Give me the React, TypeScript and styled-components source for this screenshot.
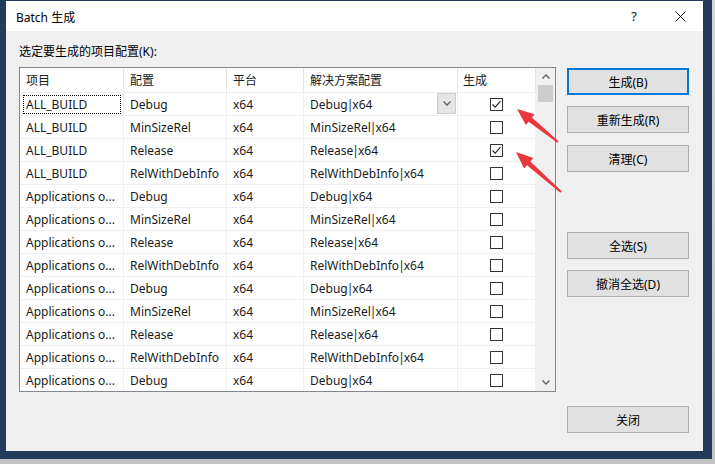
import styled, {createGlobalStyle} from 'styled-components';

const GlobalStyle = createGlobalStyle`
  html, body {
    margin: 0;
    padding: 0;
    background: #ffffff;
  }
  body {
    font-family: 'Noto Sans', 'Noto Sans CJK SC', sans-serif;
    font-size: 12px;
    color: #000;
  }
`;

const Frame = styled.div`
  position: relative;
  width: 715px;
  height: 464px;
  box-sizing: border-box;
  padding: 0 3px 5px 0;
  background: linear-gradient(180deg, #d6d6d6 0%, #c4c4c4 100%);
  overflow: hidden;
`;

const Window = styled.div`
  box-sizing: border-box;
  width: 712px;
  height: 459px;
  border-style: solid;
  border-color: #233b5b;
  border-width: 1px 9px 8px 6px;
  background: #f0f0f0;
  display: flex;
  flex-direction: column;
`;

const TitleBar = styled.div`
  height: 30px;
  flex: none;
  background: #ffffff;
  display: flex;
  align-items: center;
  padding: 0 0 0 10px;
`;

const Title = styled.div`
  flex: 1;
  font-size: 12px;
  color: #000;
  padding-top: 1px;
`;

const TitleButton = styled.div`
  width: 46px;
  height: 30px;
  display: flex;
  align-items: center;
  justify-content: center;
  font-size: 13px;
  color: #111;
`;

const Body = styled.div`
  flex: 1;
  display: grid;
  grid-template-columns: 537px 122px;
  column-gap: 11px;
  padding: 13px 0 0 13px;
`;

const Left = styled.div`
  display: flex;
  flex-direction: column;
`;

const Label = styled.div`
  height: 16px;
  line-height: 16px;
  margin-bottom: 7px;
  color: #000;
`;

const Table = styled.div`
  box-sizing: border-box;
  width: 537px;
  height: 325px;
  border: 1px solid #828790;
  background: #ffffff;
  display: flex;
`;

const Grid = styled.div`
  width: 516px;
  display: grid;
  grid-template-columns: 104px 103px 77px 154px 78px;
  grid-auto-rows: 23px;
  grid-template-rows: 24px;
`;

const HeadCell = styled.div<{$pad?: number}>`
  box-sizing: border-box;
  display: flex;
  align-items: center;
  padding-left: ${({$pad}) => $pad ?? 6}px;
  border-right: 1px solid #e5e5e5;
  color: #1a1a1a;
`;

const Cell = styled.div<{$center?: boolean}>`
  position: relative;
  box-sizing: border-box;
  display: flex;
  align-items: center;
  justify-content: ${({$center}) => ($center ? 'center' : 'flex-start')};
  padding-left: ${({$center}) => ($center ? '0' : '6px')};
  border-right: 1px solid #f0f0f0;
  border-top: 1px solid #f0f0f0;
  color: #1a1a1a;
  white-space: nowrap;
  overflow: hidden;
`;

const Pipe = styled.span`
  margin: 0 -1px;
`;

const Focus = styled.div`
  position: absolute;
  left: 3px;
  top: 2px;
  right: 2px;
  bottom: 1px;
  border: 1px dotted #000;
  pointer-events: none;
`;

const DropButton = styled.div`
  position: absolute;
  right: 1px;
  top: 0px;
  width: 19px;
  height: 21px;
  box-sizing: border-box;
  background: #e5e5e5;
  border: 1px solid #cccccc;
  display: flex;
  align-items: center;
  justify-content: center;
`;

const Box = styled.div`
  width: 13px;
  height: 13px;
  box-sizing: border-box;
  border: 1px solid #333333;
  background: #fff;
  display: flex;
  align-items: center;
  justify-content: center;
`;

const ScrollBar = styled.div`
  width: 19px;
  background: #f0f0f0;
  display: flex;
  flex-direction: column;
  align-items: center;
`;

const ScrollArrow = styled.div`
  height: 17px;
  width: 17px;
  display: flex;
  align-items: center;
  justify-content: center;
`;

const Thumb = styled.div`
  width: 15px;
  height: 17px;
  background: #cdcdcd;
`;

const ScrollTrack = styled.div`
  flex: 1;
`;

const Buttons = styled.div`
  display: flex;
  flex-direction: column;
  padding-top: 24px;
`;

const Button = styled.div<{$default?: boolean; $gap?: number}>`
  box-sizing: border-box;
  height: 27px;
  margin-top: ${({$gap}) => $gap ?? 0}px;
  background: #e1e1e1;
  border: ${({$default}) => ($default ? '2px solid #0078d7' : '1px solid #adadad')};
  display: flex;
  align-items: center;
  justify-content: center;
  color: #000;
`;

const Overlay = styled.svg`
  position: absolute;
  left: 0;
  top: 0;
  pointer-events: none;
`;

type RowData = {
  project: string;
  config: string;
  platform: string;
  build: boolean;
};

const configs = ['Debug', 'MinSizeRel', 'Release', 'RelWithDebInfo'];

const rows: RowData[] = Array.from({length: 13}, (_, i) => ({
  project: i < 4 ? 'ALL_BUILD' : 'Applications o...',
  config: configs[i % 4],
  platform: 'x64',
  build: i === 0 || i === 2,
}));

const Check = () => (
  <svg width="11" height="11" viewBox="0 0 11 11">
    <polyline points="1.5,5.5 4.2,8.2 9.5,2.2" fill="none" stroke="#222" strokeWidth="1.1" />
  </svg>
);

const Chevron = ({up}: {up?: boolean}) => (
  <svg width="8" height="5" viewBox="0 0 8 5">
    <polyline
      points={up ? '0.5,4.5 4,1 7.5,4.5' : '0.5,0.5 4,4 7.5,0.5'}
      fill="none"
      stroke="#606060"
      strokeWidth="1.3"
    />
  </svg>
);

const arrowPoints = (tx: number, ty: number, ex: number, ey: number) => {
  const dx = ex - tx;
  const dy = ey - ty;
  const len = Math.hypot(dx, dy);
  const ux = dx / len;
  const uy = dy / len;
  const nx = -uy;
  const ny = ux;
  const bx = tx + 17 * ux;
  const by = ty + 17 * uy;
  const p = (x: number, y: number) => `${x.toFixed(1)},${y.toFixed(1)}`;
  return [
    p(tx, ty),
    p(bx + 7 * nx, by + 7 * ny),
    p(bx + 2.6 * nx, by + 2.6 * ny),
    p(ex + 1 * nx, ey + 1 * ny),
    p(ex - 1 * nx, ey - 1 * ny),
    p(bx - 2.6 * nx, by - 2.6 * ny),
    p(bx - 7 * nx, by - 7 * ny),
  ].join(' ');
};

const Row = ({row, first}: {row: RowData; first: boolean}) => (
  <>
    <Cell>
      {row.project}
      {first && <Focus />}
    </Cell>
    <Cell>{row.config}</Cell>
    <Cell>{row.platform}</Cell>
    <Cell>
      {row.config}
      <Pipe>|</Pipe>
      {row.platform}
      {first && (
        <DropButton>
          <Chevron />
        </DropButton>
      )}
    </Cell>
    <Cell $center>
      <Box>{row.build && <Check />}</Box>
    </Cell>
  </>
);

const App = () => (
  <>
    <GlobalStyle />
    <Frame>
      <Window>
        <TitleBar>
          <Title>Batch 生成</Title>
          <TitleButton>?</TitleButton>
          <TitleButton>
            <svg width="11" height="11" viewBox="0 0 11 11">
              <path d="M0.5 0.5 L10.5 10.5 M10.5 0.5 L0.5 10.5" stroke="#111" strokeWidth="1" />
            </svg>
          </TitleButton>
        </TitleBar>
        <Body>
          <Left>
            <Label>选定要生成的项目配置(K):</Label>
            <Table>
              <Grid>
                <HeadCell>项目</HeadCell>
                <HeadCell>配置</HeadCell>
                <HeadCell>平台</HeadCell>
                <HeadCell>解决方案配置</HeadCell>
                <HeadCell $pad={5}>生成</HeadCell>
                {rows.map((r, i) => (
                  <Row key={i} row={r} first={i === 0} />
                ))}
              </Grid>
              <ScrollBar>
                <ScrollArrow>
                  <Chevron up />
                </ScrollArrow>
                <Thumb />
                <ScrollTrack />
                <ScrollArrow>
                  <Chevron />
                </ScrollArrow>
              </ScrollBar>
            </Table>
          </Left>
          <Buttons>
            <Button $default>生成(B)</Button>
            <Button $gap={11}>重新生成(R)</Button>
            <Button $gap={12}>清理(C)</Button>
            <Button $gap={60}>全选(S)</Button>
            <Button $gap={11}>撤消全选(D)</Button>
            <Button $gap={109}>关闭</Button>
          </Buttons>
        </Body>
      </Window>
      <Overlay width="715" height="464">
        <polygon points={arrowPoints(517, 109, 558, 142)} fill="#e8373d" />
        <polygon points={arrowPoints(516, 152, 561, 192)} fill="#e8373d" />
      </Overlay>
    </Frame>
  </>
);

export default App;
